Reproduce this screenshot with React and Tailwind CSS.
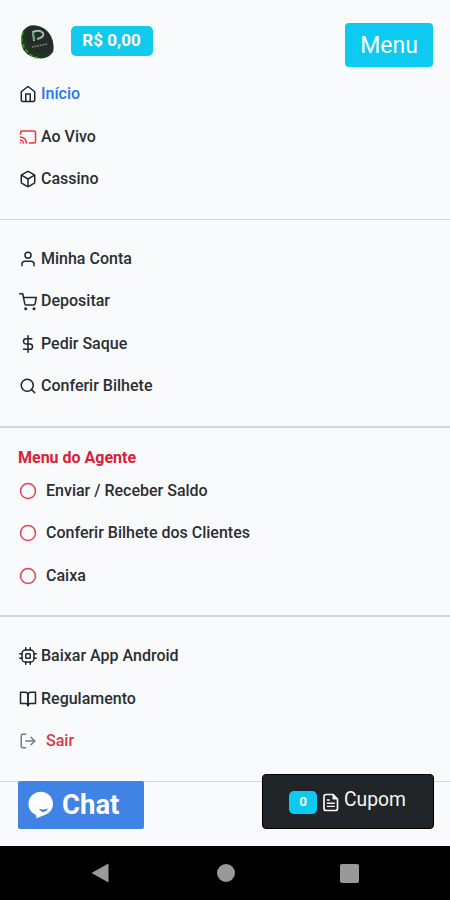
import React from "react";
import {
  FiHome,
  FiCast,
  FiBox,
  FiUser,
  FiShoppingCart,
  FiDollarSign,
  FiSearch,
  FiCircle,
  FiBookOpen,
  FiLogOut,
} from "react-icons/fi";

// Rounded chip outline, softer than the feather one
function ChipIcon({ className }) {
  return (
    <svg viewBox="0 0 24 24" className={className} fill="none" stroke="currentColor" strokeWidth="2" strokeLinecap="round">
      <rect x="4" y="4" width="16" height="16" rx="4.500" />
      <rect x="9" y="9" width="6" height="6" rx="1" />
      <path d="M9 1v3M15 1v3M9 20v3M15 20v3M20 9h3M20 15h3M1 9h3M1 15h3" />
    </svg>
  );
}

const mainLinks = [
  { label: "Início", icon: FiHome, textClass: "text-[#2a75ee]" },
  { label: "Ao Vivo", icon: FiCast, iconClass: "text-[#f5333b]" },
  { label: "Cassino", icon: FiBox },
];

const accountLinks = [
  { label: "Minha Conta", icon: FiUser },
  { label: "Depositar", icon: FiShoppingCart },
  { label: "Pedir Saque", icon: FiDollarSign },
  { label: "Conferir Bilhete", icon: FiSearch },
];

const agentLinks = [
  { label: "Enviar / Receber Saldo", icon: FiCircle, iconClass: "text-[#e04450]", wide: true },
  { label: "Conferir Bilhete dos Clientes", icon: FiCircle, iconClass: "text-[#e04450]", wide: true },
  { label: "Caixa", icon: FiCircle, iconClass: "text-[#e04450]", wide: true },
];

const otherLinks = [
  { label: "Baixar App Android", icon: ChipIcon },
  { label: "Regulamento", icon: FiBookOpen },
  { label: "Sair", icon: FiLogOut, iconClass: "text-[#777b7e]", textClass: "text-[#dc3549]", wide: true },
];

function MenuItem({ item }) {
  const Icon = item.icon;
  return (
    <li className="h-[42.4px] flex items-center pl-[19px]">
      <Icon className={`size-[18px] shrink-0 mt-[1.400px] ${item.iconClass || "text-[#212529]"}`} />
      <span className={`mt-[1px] ${item.wide ? "ml-[9px]" : "ml-1"} ${item.textClass || "text-[#2b2e31]"}`}>
        {item.label}
      </span>
    </li>
  );
}

function MenuList({ items }) {
  return (
    <ul>
      {items.map((item) => (
        <MenuItem key={item.label} item={item} />
      ))}
    </ul>
  );
}

function Divider() {
  return <hr className="mt-[19px] mb-[17px] border-0 h-[1.6px] bg-[#d3d5d7]" />;
}

function Logo() {
  return (
    <svg viewBox="0 0 34 36" className="w-[34px] h-9" aria-label="Logo">
      <path
        d="M3 7 Q8 0 16 1.500 Q26 3 31 12 Q35 20 33 28 Q29 34 21 34.500 Q9 34 3.500 26 Q-1 17 3 7Z"
        fill="#1c3a1b"
      />
      <path d="M8 3 Q17 0 25 6 Q33 14 33 25 Q30 30 22 30 Q12 28 7 19 Q4 9 8 3Z" fill="#252b29" />
      <path d="M3 8 Q0 18 6 26 Q11 33 19 34" fill="none" stroke="#3c8f20" strokeWidth="1.600" strokeDasharray="4 2" />
      <path d="M14 17 L13 8 Q20 5 23 9 Q25 13 17 15" fill="none" stroke="#a7b8ad" strokeWidth="2" />
      <path d="M13 8 L14 16" stroke="#4bb55a" strokeWidth="1.500" />
      <path d="M12 23 L27 20" stroke="#69736f" strokeWidth="1.800" strokeDasharray="2 .7" />
    </svg>
  );
}

export default function App() {
  return (
    <div className="w-[450px] h-[900px] overflow-hidden flex flex-col bg-[#f9fafc] font-['Roboto',sans-serif] text-base font-medium">
      <div className="relative flex-1 min-h-0">
        {/* Header */}
        <header className="h-[72.6px] flex items-start pl-5 pr-[17px]">
          <div className="mt-6">
            <Logo />
          </div>
          <span className="mt-[26px] ml-[17px] pr-[1px] w-[82px] h-[29.500px] rounded-[5px] bg-[#12caeb] text-white font-bold text-[17px] flex items-center justify-center">
            R$ 0,00
          </span>
          <button className="ml-auto mt-[23px] pt-[2px] w-[88px] h-11 rounded-[4px] bg-[#0dcaf0] text-white font-normal text-[23px] flex items-center justify-center">
            Menu
          </button>
        </header>

        <nav>
          <MenuList items={mainLinks} />
          <Divider />
          <MenuList items={accountLinks} />
          <Divider />
          <h2 className="h-[24.600px] pt-[1px] pl-[18px] leading-6 font-bold text-[#d9203a]">Menu do Agente</h2>
          <MenuList items={agentLinks} />
          <Divider />
          <div className="pt-[0.600px]">
            <MenuList items={otherLinks} />
          </div>
          <Divider />
        </nav>

        {/* Floating buttons */}
        <button className="absolute left-[18px] bottom-[17px] w-[126px] h-12 rounded-[2px] bg-[#4083e5] text-white flex items-center pl-[10px]">
          <svg viewBox="0 0 26 28" className="w-[26px] h-7">
            <path d="M12.800.8C19.500.8 25 6 25 12.800c0 6-4 9.700-8.500 11.200L8.500 27.200 8 24C3.500 22 .5 18.200.5 12.800.5 6 6 .8 12.800.8Z" fill="#fff" />
            <path d="M11 17.800q4.300 1.600 9-.2-1.300 3.300-4.600 3.300-3.100 0-4.400-3.100Z" fill="#4083e5" />
          </svg>
          <span className="ml-2 text-[27.500px] font-bold">Chat</span>
        </button>
        <button className="absolute right-4 bottom-[17px] w-[172px] h-[55px] rounded-[4px] border border-black bg-[#212528] text-[#f4f5f6] flex items-center pl-[26px]">
          <span className="mt-[2px] w-7 h-[23px] pb-[2px] rounded-[5px] bg-[#0dcaf0] text-white text-[13.500px] font-bold flex items-center justify-center">
            0
          </span>
          <svg viewBox="0 0 16 19" className="ml-[6px] mt-[1px] w-4 h-[19px]">
            <path d="M3 1.500h7l4.500 4.500v9.500a2 2 0 0 1-2 2H3a2 2 0 0 1-2-2v-12a2 2 0 0 1 2-2Z" fill="none" stroke="#f4f5f6" strokeWidth="1.700" />
            <path d="M9.500 1v5.500H15Z" fill="#f4f5f6" />
            <path d="M3.800 7h3M3.800 10.200h8M3.800 13.400h8" stroke="#f4f5f6" strokeWidth="1.400" />
          </svg>
          <span className="ml-[5px] -mt-[2px] text-[19.300px] font-normal">Cupom</span>
        </button>
      </div>

      {/* Android navigation bar */}
      <footer className="h-[54px] shrink-0 bg-black flex items-center">
        <svg viewBox="0 0 18 20" className="ml-[91px] w-[18px] h-5">
          <path d="M17.500.5v19L.5 10Z" fill="#999" />
        </svg>
        <span className="ml-[108px] size-[18px] rounded-full bg-[#999]" />
        <span className="ml-[105px] size-[19px] rounded-[2px] bg-[#999]" />
      </footer>
    </div>
  );
}
